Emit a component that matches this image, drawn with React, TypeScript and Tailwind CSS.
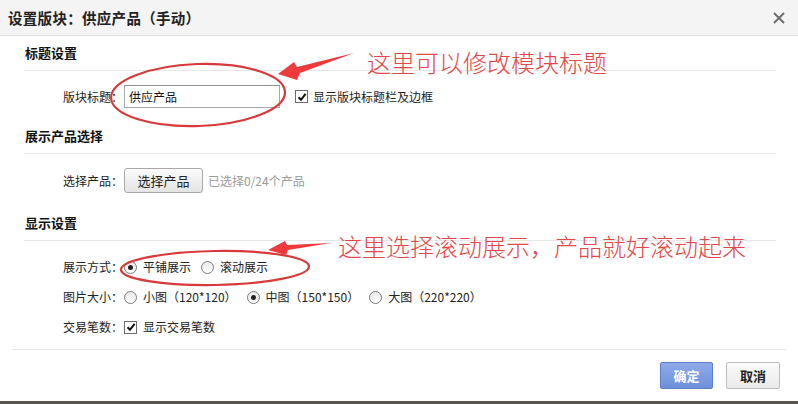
import React from 'react';

const font = { fontFamily: '"Noto Sans CJK SC", "Liberation Sans", sans-serif' };

function CheckBox() {
  return (
    <span className="flex h-[13px] w-[13px] shrink-0 items-center justify-center border border-[#6b6b6b] bg-white">
      <svg width="10" height="10" viewBox="0 0 10 10">
        <path d="M1.5 5.2 L4 7.8 L8.6 1.8" fill="none" stroke="#111" strokeWidth="2" />
      </svg>
    </span>
  );
}

function Radio({ on }: { on?: boolean }) {
  return (
    <span className="flex h-[13px] w-[13px] shrink-0 items-center justify-center rounded-full border border-[#7a7a7a] bg-gradient-to-b from-[#e9e9e9] to-white">
      {on && <span className="h-[5px] w-[5px] rounded-full bg-[#222]" />}
    </span>
  );
}

function Section({ title }: { title: string }) {
  return (
    <div className="flex h-[35px] items-center border-b border-[#e6e6e6] pl-px text-[13px] font-bold text-[#111]">
      {title}
    </div>
  );
}

function Label({ children }: { children: React.ReactNode }) {
  return <span className="w-[61px] shrink-0 text-[12px] text-[#222]">{children}</span>;
}

function Option({ on, text }: { on?: boolean; text: string }) {
  return (
    <span className="mr-[10px] flex items-center gap-[6px]">
      <Radio on={on} />
      <span className="text-[12px] text-[#222]">{text}</span>
    </span>
  );
}

export default function App() {
  return (
    <div className="relative h-[404px] w-[798px] overflow-hidden bg-white" style={font}>
      {/* header */}
      <div className="flex h-[36px] items-center justify-between border-b border-[#dcdcdc] bg-[#f4f4f4] pl-[8px] pr-[12px]">
        <span className="text-[14.5px] font-bold tracking-[0.3px] text-[#222]">设置版块：供应产品（手动）</span>
        <svg width="14" height="14" viewBox="0 0 14 14">
          <path d="M2 2 L12 12 M12 2 L2 12" stroke="#6e6e6e" strokeWidth="2" />
        </svg>
      </div>

      {/* body */}
      <div className="pl-[24px] pr-[22px] pb-[12px]">
        <Section title="标题设置" />
        <div className="mt-[14px] flex h-[23px] items-center pl-[39px]">
          <Label>版块标题：</Label>
          <div className="flex h-[23px] w-[156px] items-center border border-[#a9a9a9] border-t-[#8e8e8e] pl-[4px] text-[12px] text-[#111]">
            供应产品
          </div>
          <span className="ml-[15px] flex items-center gap-[5px]">
            <CheckBox />
            <span className="text-[12px] text-[#222]">显示版块标题栏及边框</span>
          </span>
        </div>

        <div className="mt-[11px]">
          <Section title="展示产品选择" />
        </div>
        <div className="mt-[14px] flex h-[25px] items-center pl-[39px]">
          <Label>选择产品：</Label>
          <button className="flex h-[25px] w-[79px] items-center justify-center rounded-[3px] border border-[#a8a8a8] bg-gradient-to-b from-[#fbfbfb] to-[#e4e4e4] text-[13px] text-[#222]">
            选择产品
          </button>
          <span className="ml-[5px] text-[12px] text-[#9a9a9a]">已选择0/24个产品</span>
        </div>

        <div className="mt-[13px]">
          <Section title="显示设置" />
        </div>
        <div className="mt-[16px] flex flex-col gap-[10px] pl-[39px]">
          <div className="flex h-[20px] items-center">
            <Label>展示方式：</Label>
            <Option on text="平铺展示" />
            <Option text="滚动展示" />
          </div>
          <div className="flex h-[20px] items-center">
            <Label>图片大小：</Label>
            <Option text="小图（120*120）" />
            <Option on text="中图（150*150）" />
            <Option text="大图（220*220）" />
          </div>
          <div className="flex h-[20px] items-center">
            <Label>交易笔数：</Label>
            <span className="flex items-center gap-[6px]">
              <CheckBox />
              <span className="text-[12px] text-[#222]">显示交易笔数</span>
            </span>
          </div>
        </div>
      </div>

      {/* footer */}
      <div className="mx-[12px] flex justify-end gap-[13px] border-t border-[#e6e6e6] pt-[12px] pb-[12px] pr-[6px]">
        <button className="flex h-[27px] w-[53px] items-center justify-center rounded-[2px] border border-[#5b7dca] bg-gradient-to-b from-[#8eabe9] to-[#6e8fdb] text-[13px] font-bold text-white">
          确定
        </button>
        <button className="flex h-[27px] w-[54px] items-center justify-center rounded-[2px] border border-[#bdbdbd] bg-gradient-to-b from-[#fbfbfb] to-[#e9e9e9] text-[13px] font-bold text-[#222]">
          取消
        </button>
      </div>
      <div className="h-[3px] bg-[#5b5350]" />

      {/* annotations */}
      <svg className="pointer-events-none absolute left-0 top-0" width="798" height="404">
        <ellipse cx="198" cy="95" rx="87" ry="31" fill="none" stroke="#d9393a" strokeWidth="2.2" transform="rotate(-2 198 95)" />
        <polygon points="278,74 294,62 297,67 354,53 300,73 297,80" fill="#ee3a3c" />
        <ellipse cx="215" cy="268" rx="94" ry="17" fill="none" stroke="#d9393a" strokeWidth="2.2" transform="rotate(-1 215 268)" />
        <polygon points="268,250 285,241 287,245 331,243 288,250 286,255" fill="#ee3a3c" />
      </svg>
      <span className="pointer-events-none absolute left-[367px] top-[49px] text-[24px] leading-[26px] font-light text-[#e2474a]">
        这里可以修改模块标题
      </span>
      <span className="pointer-events-none absolute left-[338px] top-[233px] text-[24px] leading-[26px] font-light text-[#e2474a]">
        这里选择滚动展示，产品就好滚动起来
      </span>
    </div>
  );
}
